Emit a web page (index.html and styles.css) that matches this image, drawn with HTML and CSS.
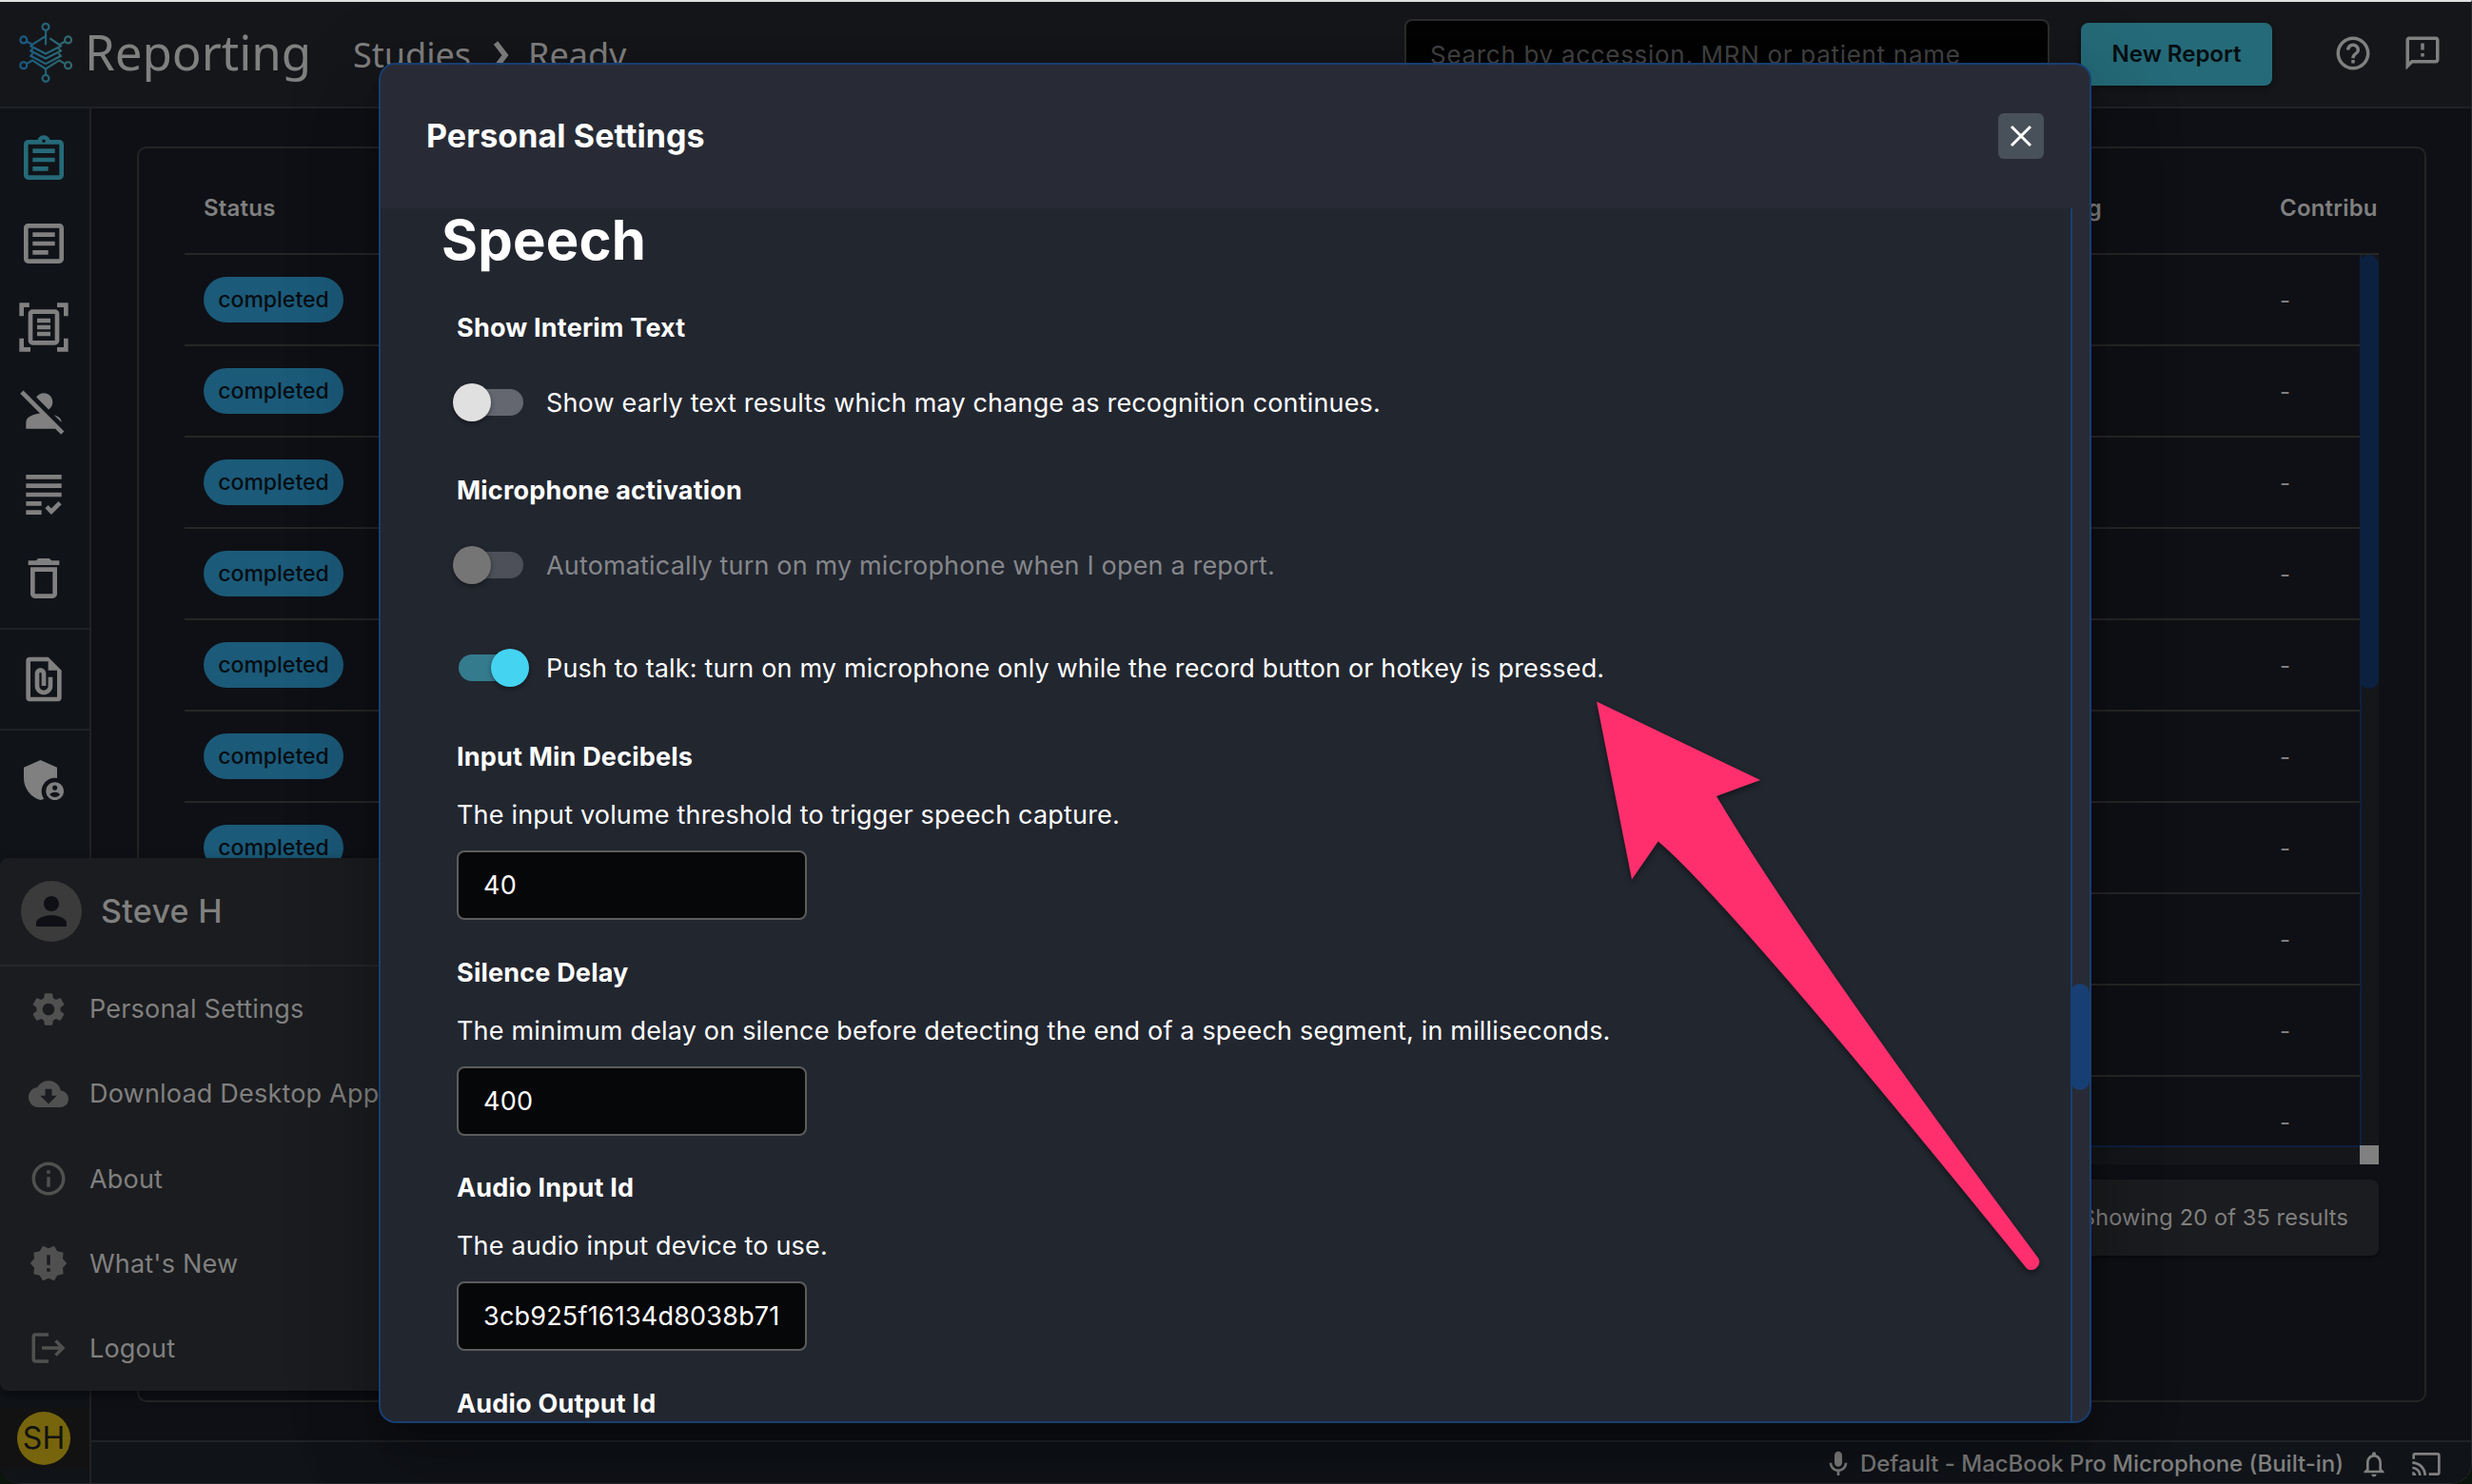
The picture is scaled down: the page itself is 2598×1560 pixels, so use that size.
FILE: index.html
```
<!DOCTYPE html>
<html lang="en">
<head>
    <meta charset="UTF-8">
    <meta name="viewport" content="width=device-width, initial-scale=1.0">
    <title>Reporting</title>
    <link rel="stylesheet" href="styles.css">
</head>
<body>
    <div class="window">
        <header class="topbar">
            <svg class="logo" viewBox="58 40 174 196">
                <defs>
                    <linearGradient id="logo-color" gradientUnits="userSpaceOnUse" x1="60" y1="0" x2="230" y2="0">
                        <stop offset="0" stop-color="#185a87"></stop>
                        <stop offset="0.5" stop-color="#226479"></stop>
                        <stop offset="1" stop-color="#30696c"></stop>
                    </linearGradient>
                </defs>
                <g fill="none" stroke="url(#logo-color)" stroke-width="6.5">
                    <circle cx="145" cy="56" r="10.5"></circle>
                    <circle cx="75" cy="97" r="10.5"></circle>
                    <circle cx="216" cy="97" r="10.5"></circle>
                    <circle cx="75" cy="178" r="10.5"></circle>
                    <circle cx="216" cy="178" r="10.5"></circle>
                    <circle cx="145" cy="219" r="10.5"></circle>
                    <path d="M145.5 67L145 113"></path>
                    <path d="M84 102L103 112L145 85M207 102L188 112L158 92"></path>
                    <path d="M103 112L98 117L145 141L193 117L188 112"></path>
                    <path d="M104 124L98 132L145 156L193 132L186 124"></path>
                    <path d="M104 140L98 148L145 173L193 148L186 140"></path>
                    <path d="M84 173L103 162L145 189L188 162L207 173M145 187L145.5 208"></path>
                </g>
            </svg>
            <span class="brand">Reporting</span>
            <nav class="breadcrumb">
                <span>Studies</span>
                <svg class="crumb-arrow" viewBox="0 0 18 30"><path d="M3 2l10 13-10 13"></path></svg>
                <span>Ready</span>
            </nav>
            <div class="search">Search by accession, MRN or patient name</div>
            <button class="new-report">New Report</button>
            <svg class="icon top-icon help" viewBox="0 0 24 24"><path d="M11 18h2v-2h-2zm1-16C6.48 2 2 6.48 2 12s4.480 10 10 10 10-4.480 10-10S17.520 2 12 2m0 18c-4.410 0-8-3.590-8-8s3.590-8 8-8 8 3.590 8 8-3.590 8-8 8m0-14c-2.210 0-4 1.790-4 4h2c0-1.100.9-2 2-2s2 .9 2 2c0 2-3 1.750-3 5h2c0-2.250 3-2.500 3-5 0-2.210-1.790-4-4-4"></path></svg>
            <svg class="icon top-icon" viewBox="0 0 24 24"><path d="M20 2H4c-1.100 0-1.990.9-1.990 2L2 22l4-4h14c1.100 0 2-.9 2-2V4c0-1.100-.9-2-2-2m0 14H5.170L4 17.170V4h16zm-9-4h2v2h-2zm0-6h2v4h-2z"></path></svg>
        </header>

        <div class="workspace">
            <aside class="sidebar">
                <div class="side-group">
                    <a class="side-item active"><svg class="icon" viewBox="0 0 24 24"><path d="M7 15h7v2H7zm0-4h10v2H7zm0-4h10v2H7zm12-4h-4.180C14.400 1.840 13.300 1 12 1c-1.300 0-2.400.84-2.820 2H5c-1.100 0-2 .9-2 2v14c0 1.100.9 2 2 2h14c1.100 0 2-.9 2-2V5c0-1.100-.9-2-2-2m-7-.25c.41 0 .75.34.75.75s-.34.75-.75.75-.75-.34-.75-.75.34-.75.75-.75M19 19H5V5h14z"></path></svg></a>
                    <a class="side-item"><svg class="icon" viewBox="0 0 24 24"><path d="M19 5v14H5V5h14m0-2H5c-1.100 0-2 .9-2 2v14c0 1.100.9 2 2 2h14c1.100 0 2-.9 2-2V5c0-1.100-.9-2-2-2zM14 17H7v-2h7v2zm3-4H7v-2h10v2zm0-4H7V7h10v2z"></path></svg></a>
                    <a class="side-item"><svg class="icon" viewBox="0 0 24 24"><path d="M5.500 3H3v4H1V1h4.500zM23 7V1h-5v2h3v4zM6 21H3v-4H1v6h5zM21 17v4h-3v2h5v-6zM17 6H7v12h10zm2 12c0 1.100-.9 2-2 2H7c-1.100 0-2-.9-2-2V6c0-1.100.9-2 2-2h10c1.100 0 2 .9 2 2zM15 8H9v2h6zm0 3H9v2h6zm0 3H9v2h6z"></path></svg></a>
                    <a class="side-item"><svg class="icon" viewBox="0 0 24 24"><path d="M8.650 5.820C9.360 4.720 10.600 4 12 4c2.210 0 4 1.790 4 4 0 1.400-.72 2.640-1.820 3.350zM20 17.170c-.02-1.100-.63-2.110-1.610-2.620-.54-.28-1.130-.54-1.770-.76zm1.190 4.020L2.810 2.810 1.390 4.220l8.890 8.890c-1.810.23-3.390.79-4.670 1.450-1 .51-1.610 1.540-1.610 2.660V20h13.170l2.610 2.610z"></path></svg></a>
                    <a class="side-item"><svg class="icon" viewBox="0 0 24 24"><path d="M4 7h16v2H4zm0 6h16v-2H4zm0 4h7v-2H4zm0 4h7v-2H4zm11.410-2.830L14 16.750l-1.410 1.410L15.410 21 20 16.420 18.580 15zM4 3v2h16V3z"></path></svg></a>
                    <a class="side-item"><svg class="icon" viewBox="0 0 24 24"><path d="M6 19c0 1.100.9 2 2 2h8c1.100 0 2-.9 2-2V7H6zM8 9h8v10H8zm7.500-5-1-1h-5l-1 1H5v2h14V4z"></path></svg></a>
                </div>
                <div class="side-group">
                    <a class="side-item"><svg class="icon" viewBox="0 0 24 24"><path d="M14 2H5.500C4.700 2 4 2.700 4 3.500v17c0 .8.7 1.500 1.500 1.500h13c.8 0 1.500-.7 1.500-1.500V8zM18 20H6V4h8v4h4z"></path><path d="M16 11h-2v4c0 1.100-.9 2-2 2s-2-.9-2-2V9.500c0-.28.22-.5.5-.5s.5.22.5.5V15h2V9.500C13 8.120 11.880 7 10.500 7S8 8.120 8 9.500V15c0 2.210 1.790 4 4 4s4-1.790 4-4z"></path></svg></a>
                </div>
                <div class="side-group">
                    <a class="side-item"><svg class="icon" viewBox="0 0 24 24"><path d="M17 11c.34 0 .67.04 1 .09V6.270L10.500 3 3 6.270v4.910c0 4.540 3.200 8.790 7.500 9.820.55-.13 1.080-.32 1.600-.55-.69-.98-1.100-2.170-1.100-3.450 0-3.310 2.690-6 6-6"></path><path d="M17 13c-2.210 0-4 1.790-4 4s1.790 4 4 4 4-1.790 4-4-1.790-4-4-4m0 1.380c.62 0 1.120.51 1.120 1.120s-.51 1.120-1.120 1.120-1.120-.51-1.120-1.120.5-1.120 1.120-1.120m0 5.370c-.93 0-1.740-.46-2.240-1.170.05-.72 1.510-1.080 2.240-1.080s2.190.36 2.240 1.080c-.5.71-1.310 1.170-2.240 1.170"></path></svg></a>
                </div>
                <div class="side-user"><span class="initials">SH</span></div>
            </aside>

            <div class="main">
                <section class="card">
                    <div class="table-head">
                        <span>Status</span>
                        <span class="cut">Reading</span>
                        <span>Contribu</span>
                    </div>
                    <div class="table-body">
                        <div class="rows">
                            <div class="row"><span class="pill">completed</span><span></span><span>-</span></div>
                            <div class="row"><span class="pill">completed</span><span></span><span>-</span></div>
                            <div class="row"><span class="pill">completed</span><span></span><span>-</span></div>
                            <div class="row"><span class="pill">completed</span><span></span><span>-</span></div>
                            <div class="row"><span class="pill">completed</span><span></span><span>-</span></div>
                            <div class="row"><span class="pill">completed</span><span></span><span>-</span></div>
                            <div class="row"><span class="pill">completed</span><span></span><span>-</span></div>
                            <div class="row"><span></span><span></span><span>-</span></div>
                            <div class="row"><span></span><span></span><span>-</span></div>
                            <div class="row"><span></span><span></span><span>-</span></div>
                        </div>
                        <div class="table-track"><div class="table-thumb"></div></div>
                        <div class="table-track-x"></div>
                        <div class="track-corner"></div>
                    </div>
                    <div class="results">Showing 20 of 35 results</div>
                </section>
                <footer class="statusbar">
                    <svg class="icon" viewBox="0 0 24 24"><path d="M12 14c1.660 0 3-1.340 3-3V5c0-1.660-1.340-3-3-3S9 3.340 9 5v6c0 1.660 1.340 3 3 3m5-3c0 2.760-2.240 5-5 5s-5-2.240-5-5H5c0 3.530 2.610 6.430 6 6.920V21h2v-3.080c3.390-.49 6-3.390 6-6.920z"></path></svg>
                    <span class="device">Default - MacBook Pro Microphone (Built-in)</span>
                    <svg class="icon bell" viewBox="0 0 24 24"><path d="M12 22c1.100 0 2-.9 2-2h-4c0 1.100.9 2 2 2m6-6v-5c0-3.070-1.630-5.640-4.500-6.320V4c0-.83-.67-1.500-1.500-1.500s-1.500.67-1.500 1.500v.68C7.640 5.360 6 7.920 6 11v5l-2 2v1h16v-1zm-2 1H8v-6c0-2.480 1.510-4.500 4-4.500s4 2.020 4 4.500z"></path></svg>
                    <svg class="icon" viewBox="0 0 24 24"><path d="M21 3H3c-1.100 0-2 .9-2 2v3h2V5h18v14h-7v2h7c1.100 0 2-.9 2-2V5c0-1.100-.9-2-2-2M1 18v3h3c0-1.660-1.340-3-3-3m0-4v2c2.760 0 5 2.240 5 5h2c0-3.870-3.130-7-7-7m0-4v2c4.970 0 9 4.030 9 9h2c0-6.080-4.930-11-11-11"></path></svg>
                </footer>
            </div>
        </div>

        <!-- user menu -->
        <div class="user-menu">
            <div class="user-head">
                <div class="avatar"><svg class="icon" viewBox="0 0 24 24"><path d="M12 12c2.210 0 4-1.790 4-4s-1.790-4-4-4-4 1.790-4 4 1.790 4 4 4m0 2c-2.670 0-8 1.340-8 4v2h16v-2c0-2.660-5.330-4-8-4"></path></svg></div>
                <span class="user-name">Steve H</span>
            </div>
            <a class="menu-item"><svg class="icon" viewBox="0 0 24 24"><path d="M19.140 12.940c.04-.3.06-.61.06-.94 0-.32-.02-.64-.07-.94l2.030-1.580c.18-.14.23-.41.12-.61l-1.920-3.320c-.12-.22-.37-.29-.59-.22l-2.390.96c-.5-.38-1.030-.7-1.620-.94l-.36-2.540c-.04-.24-.24-.41-.48-.41h-3.840c-.24 0-.43.17-.47.41l-.36 2.540c-.59.24-1.130.57-1.620.94l-2.390-.96c-.22-.08-.47 0-.59.22L2.740 8.870c-.12.21-.08.47.12.61l2.030 1.580c-.05.3-.09.63-.09.94s.02.64.07.94l-2.030 1.580c-.18.14-.23.41-.12.61l1.920 3.320c.12.22.37.29.59.22l2.390-.96c.5.38 1.030.7 1.620.94l.36 2.540c.05.24.24.41.48.41h3.840c.24 0 .44-.17.47-.41l.36-2.540c.59-.24 1.130-.56 1.620-.94l2.390.96c.22.08.47 0 .59-.22l1.920-3.320c.12-.22.07-.47-.12-.61zM12 15.600c-1.980 0-3.600-1.620-3.600-3.600s1.620-3.600 3.600-3.600 3.600 1.620 3.600 3.600-1.620 3.600-3.600 3.600z"></path></svg><span>Personal Settings</span></a>
            <a class="menu-item"><svg class="icon" viewBox="0 0 24 24"><path d="M19.350 10.040C18.670 6.590 15.640 4 12 4 9.110 4 6.600 5.640 5.350 8.040 2.340 8.360 0 10.910 0 14c0 3.310 2.690 6 6 6h13c2.760 0 5-2.240 5-5 0-2.640-2.050-4.780-4.650-4.960zM17 13l-5 5-5-5h3V9h4v4h3z"></path></svg><span>Download Desktop App</span></a>
            <a class="menu-item"><svg class="icon" viewBox="0 0 24 24"><path d="M11 7h2v2h-2zm0 4h2v6h-2zm1-9C6.480 2 2 6.480 2 12s4.480 10 10 10 10-4.480 10-10S17.520 2 12 2m0 18c-4.410 0-8-3.590-8-8s3.590-8 8-8 8 3.590 8 8-3.590 8-8 8"></path></svg><span>About</span></a>
            <a class="menu-item"><svg class="icon" viewBox="0 0 24 24"><path d="m23 12-2.440-2.780.34-3.680-3.610-.82-1.890-3.180L12 3 8.600 1.540 6.710 4.720l-3.610.81.34 3.680L1 12l2.440 2.780-.34 3.690 3.610.82 1.890 3.180L12 21l3.400 1.460 1.890-3.180 3.610-.82-.34-3.680zm-10 5h-2v-2h2zm0-4h-2V7h2z"></path></svg><span>What's New</span></a>
            <a class="menu-item"><svg class="icon" viewBox="0 0 24 24"><path d="m17 7-1.410 1.410L18.170 11H8v2h10.170l-2.580 2.580L17 17l5-5zM4 5h8V3H4c-1.100 0-2 .9-2 2v14c0 1.100.9 2 2 2h8v-2H4z"></path></svg><span>Logout</span></a>
        </div>
    </div>

    <!-- settings dialog -->
    <div class="modal">
        <div class="modal-header">
            <h2>Personal Settings</h2>
            <button class="close-btn"><svg viewBox="0 0 24 24"><path d="M2 2l20 20M22 2L2 22"></path></svg></button>
        </div>
        <div class="modal-body">
            <div class="settings">
                <h1>Speech</h1>
                <h3>Show Interim Text</h3>
                <label class="switch-row">
                    <span class="switch"><span class="thumb"></span></span>
                    <span>Show early text results which may change as recognition continues.</span>
                </label>
                <h3>Microphone activation</h3>
                <label class="switch-row disabled">
                    <span class="switch"><span class="thumb"></span></span>
                    <span>Automatically turn on my microphone when I open a report.</span>
                </label>
                <label class="switch-row second">
                    <span class="switch on"><span class="thumb"></span></span>
                    <span>Push to talk: turn on my microphone only while the record button or hotkey is pressed.</span>
                </label>
                <div class="field">
                    <h3>Input Min Decibels</h3>
                    <p>The input volume threshold to trigger speech capture.</p>
                    <input type="text" value="40">
                </div>
                <div class="field">
                    <h3>Silence Delay</h3>
                    <p>The minimum delay on silence before detecting the end of a speech segment, in milliseconds.</p>
                    <input type="text" value="400">
                </div>
                <div class="field">
                    <h3>Audio Input Id</h3>
                    <p>The audio input device to use.</p>
                    <input type="text" value="3cb925f16134d8038b71">
                </div>
                <div class="field">
                    <h3>Audio Output Id</h3>
                </div>
            </div>
            <div class="modal-track"><div class="modal-thumb"></div></div>
        </div>
    </div>

    <svg class="arrow" viewBox="1660 720 500 640">
        <path d="M1678 737.500L1850 820L1804 837Q1895 990 2142.500 1323A8.500 8.500 0 0 1 2130 1333.500Q1819 949 1742.700 884.500L1715 924.500Z"></path>
    </svg>
</body>
</html>
```
FILE: styles.css
```
* {
    box-sizing: border-box;
}

body {
    margin: 0;
    width: 2598px;
    height: 1560px;
    overflow: hidden;
    position: relative;
    background-color: #0b150d;
    font-family: Inter, sans-serif;
    font-size: 27px;
    color: #808080;
}

h1, h2, h3, p {
    margin: 0;
}

.icon {
    fill: currentColor;
    fill-rule: evenodd;
    flex-shrink: 0;
}

.window {
    height: 1560px;
    display: flex;
    flex-direction: column;
    overflow: hidden;
    background-color: #0f1015;
    border-top: 2px solid #dfe1e1;
    border-right: 1px solid #26282a;
    border-bottom: 1px solid #26282a;
    border-radius: 0 0 22px 22px;
}

/* top bar */
.topbar {
    height: 112px;
    flex-shrink: 0;
    display: flex;
    align-items: flex-start;
    padding-left: 19px;
    background-color: #15161a;
    border-bottom: 2px solid #202225;
}

.logo {
    width: 58px;
    height: 65px;
    margin-top: 21px;
}

.brand {
    width: 278px;
    padding-left: 12px;
    margin-top: 16px;
    font-family: "Noto Sans", sans-serif;
    font-size: 51px;
    line-height: 72px;
}

.breadcrumb {
    display: flex;
    align-items: center;
    width: 1105px;
    margin-left: 16px;
    margin-top: 31px;
    font-family: "Noto Sans", sans-serif;
    font-size: 36px;
    line-height: 50px;
}

.crumb-arrow {
    width: 18px;
    height: 30px;
    margin: 0 19px 0 23px;
    fill: none;
    stroke: #808080;
    stroke-width: 5.5;
}

.search {
    width: 678px;
    height: 74px;
    margin-top: 18px;
    padding-left: 25px;
    border: 2px solid #2c2c2c;
    border-radius: 8px;
    background-color: #030304;
    color: #424242;
    font-size: 26px;
    line-height: 72px;
    letter-spacing: 0.7px;
}

.new-report {
    width: 201px;
    height: 66px;
    margin: 22px 0 0 33px;
    padding: 0 0 2px;
    border: none;
    border-radius: 8px;
    background-color: #256a78;
    color: #050e11;
    font-family: inherit;
    font-size: 24px;
    font-weight: 600;
    box-shadow: 0 3px 6px rgba(0, 0, 0, 0.4);
}

.top-icon {
    width: 42px;
    height: 42px;
    margin-top: 33px;
}

.top-icon.help {
    margin-left: 64px;
    margin-right: 31px;
}

.workspace {
    flex: 1;
    display: flex;
    min-height: 0;
}

/* sidebar */
.sidebar {
    width: 96px;
    display: flex;
    flex-direction: column;
    padding-top: 2px;
    background-color: #101318;
    border-right: 2px solid #202225;
}

.side-group {
    padding: 8px 0;
}

.side-group + .side-group {
    border-top: 2px solid #202225;
}

.side-item {
    height: 88px;
    display: flex;
    align-items: center;
    justify-content: center;
    padding-right: 2px;
}

.side-item .icon {
    width: 56px;
    height: 56px;
}

.side-item.active {
    color: #256a78;
}

.side-user {
    height: 64px;
    margin-top: auto;
    margin-bottom: 15px;
    padding-left: 18px;
    display: flex;
    align-items: center;
    background-color: #131212;
}

.initials {
    width: 56px;
    height: 56px;
    border-radius: 50%;
    background-color: #76650c;
    color: #121212;
    font-size: 32px;
    line-height: 56px;
    text-align: center;
}

/* table card */
.main {
    flex: 1;
    display: flex;
    flex-direction: column;
    min-width: 0;
}

.card {
    height: 1320px;
    margin: 40px 47px 40px 48px;
    padding: 16px 48px 0 48px;
    border: 2px solid #232424;
    border-radius: 10px;
}

.table-head, .row {
    display: grid;
    grid-template-columns: 1800px 382px 1fr;
    align-items: center;
    padding-left: 20px;
}

.table-head {
    height: 96px;
    padding-bottom: 2px;
    border-bottom: 2px solid #262626;
    font-size: 24px;
    font-weight: 600;
    letter-spacing: 0.2px;
    overflow: hidden;
}

.table-head .cut {
    width: 195px;
    text-align: right;
}

.table-body {
    height: 956px;
    display: grid;
    grid-template-columns: 1fr 20px;
    grid-template-rows: 936px 20px;
}

.rows {
    overflow: hidden;
}

.row {
    height: 96px;
    border-bottom: 2px solid #262626;
    font-size: 24px;
    line-height: 27px;
}

.pill {
    width: 147px;
    height: 48px;
    border-radius: 24px;
    background-color: #1b5a79;
    color: #060d12;
    font-size: 23px;
    font-weight: 500;
    line-height: 49px;
    text-align: center;
}

.table-track {
    background-color: #15161a;
    border-left: 2px solid #0c2040;
}

.table-thumb {
    height: 456px;
    margin-left: -2px;
    border-radius: 10px;
    background-color: #0c2040;
}

.table-track-x {
    background-color: #15161a;
    border-top: 2px solid #0c2040;
}

.track-corner {
    background-color: #808080;
}

.results {
    height: 80px;
    margin-top: 16px;
    padding-right: 32px;
    border-radius: 8px;
    background-color: #1b1c1f;
    font-size: 23.5px;
    line-height: 80px;
    letter-spacing: 0.15px;
    text-align: right;
    box-shadow: 0 2px 4px rgba(0, 0, 0, 0.4);
}

.statusbar {
    flex: 1;
    display: flex;
    align-items: center;
    justify-content: flex-end;
    padding-right: 31px;
    padding-top: 2px;
    background-color: #101318;
    border-top: 2px solid #202225;
    font-size: 24px;
    font-weight: 500;
}

.statusbar .icon {
    width: 32px;
    height: 32px;
}

.device {
    margin-left: 7px;
    letter-spacing: -0.03px;
}

.statusbar .bell {
    margin: 0 23px 0 16px;
}

/* user menu */
.user-menu {
    position: absolute;
    left: 0;
    top: 902px;
    width: 480px;
    height: 560px;
    display: flex;
    flex-direction: column;
    border-radius: 8px;
    background-color: #1b1c1f;
    box-shadow: 0 4px 12px rgba(0, 0, 0, 0.5);
}

.user-head {
    height: 114px;
    display: flex;
    align-items: center;
    gap: 20px;
    padding-left: 22px;
    border-bottom: 2px solid #262729;
    font-size: 34px;
    font-weight: 500;
    letter-spacing: 0.3px;
}

.user-name {
    padding-bottom: 2px;
}

.avatar {
    width: 64px;
    height: 64px;
    display: flex;
    align-items: center;
    justify-content: center;
    border-radius: 50%;
    background-color: #3b3b3b;
    color: #0f1015;
}

.avatar .icon {
    width: 48px;
    height: 48px;
}

.menu-item {
    flex: 1;
    display: flex;
    align-items: center;
    gap: 22px;
    padding-left: 30px;
    letter-spacing: 0.2px;
    white-space: nowrap;
}

.menu-item .icon {
    width: 42px;
    height: 42px;
    color: #505050;
}

/* dialog */
.modal {
    position: absolute;
    left: 398px;
    top: 66px;
    width: 1800px;
    height: 1430px;
    display: flex;
    flex-direction: column;
    overflow: hidden;
    border: 2px solid #173f73;
    border-radius: 18px;
    background-color: #22262f;
    color: #fff;
    box-shadow: 0 22px 30px -14px rgba(0, 0, 0, 0.2), 0 48px 76px 6px rgba(0, 0, 0, 0.14), 0 18px 92px 16px rgba(0, 0, 0, 0.12);
}

.modal-header {
    height: 151px;
    flex-shrink: 0;
    display: flex;
    align-items: center;
    justify-content: space-between;
    padding: 0 48px 1px;
    background-color: #282b35;
}

.modal-header h2 {
    padding-bottom: 1px;
    font-size: 34px;
    font-weight: 700;
    letter-spacing: 0.1px;
}

.close-btn {
    width: 48px;
    height: 48px;
    padding: 0;
    display: flex;
    align-items: center;
    justify-content: center;
    border: none;
    border-radius: 6px;
    background-color: #48505a;
}

.close-btn svg {
    width: 24px;
    height: 24px;
    fill: none;
    stroke: #fff;
    stroke-width: 3;
}

.modal-body {
    flex: 1;
    display: flex;
    min-height: 0;
}

.settings {
    flex: 1;
    padding-left: 80px;
    overflow: hidden;
}

.settings h1 {
    margin-left: -16px;
    margin-bottom: 39px;
    font-size: 58px;
    font-weight: 700;
    line-height: 66px;
    letter-spacing: 0.2px;
}

.settings h3 {
    font-size: 27px;
    font-weight: 700;
    line-height: 42px;
    letter-spacing: 0.2px;
}

.switch-row {
    height: 76px;
    display: flex;
    align-items: center;
    gap: 24px;
    margin: 19px 0 34px 2px;
    letter-spacing: 0.16px;
}

.switch-row.disabled {
    margin-bottom: 0;
}

.switch-row.disabled span {
    color: #85878b;
}

.switch-row.second {
    margin: 32px 0 35px 2px;
}

.switch {
    width: 68px;
    height: 28px;
    display: flex;
    align-items: center;
    border-radius: 14px;
    background-color: #646770;
}

.thumb {
    width: 40px;
    height: 40px;
    flex-shrink: 0;
    margin-left: -6px;
    border-radius: 50%;
    background-color: #e0e0e0;
    box-shadow: 0 2px 5px rgba(0, 0, 0, 0.4);
}

.disabled .switch {
    background-color: #4d5058;
}

.disabled .thumb {
    background-color: #757575;
}

.switch.on {
    background-color: #357b8e;
}

.switch.on .thumb {
    margin-left: 34px;
    background-color: #45d3f2;
}

.field {
    height: 226.5px;
}

.field p {
    margin: 19px 0 16px;
    line-height: 42px;
    letter-spacing: 0.18px;
}

.field input {
    display: block;
    width: 368px;
    height: 73px;
    padding: 0 26px;
    border: 2px solid #5c5c5c;
    border-radius: 8px;
    background-color: #060709;
    color: #fff;
    font-family: inherit;
    font-size: 27px;
    letter-spacing: 0.2px;
}

.modal-track {
    width: 20px;
    border-left: 2px solid #173f73;
    background-color: #282b35;
}

.modal-thumb {
    width: 20px;
    height: 112px;
    margin-left: -2px;
    margin-top: 815px;
    border-radius: 10px;
    background-color: #173f73;
}

/* pointer drawn over the dialog */
.arrow {
    position: absolute;
    left: 1660px;
    top: 720px;
    width: 500px;
    height: 640px;
    fill: #ff2f6d;
    filter: drop-shadow(0 3px 3px rgba(0, 0, 0, 0.45));
}
```
